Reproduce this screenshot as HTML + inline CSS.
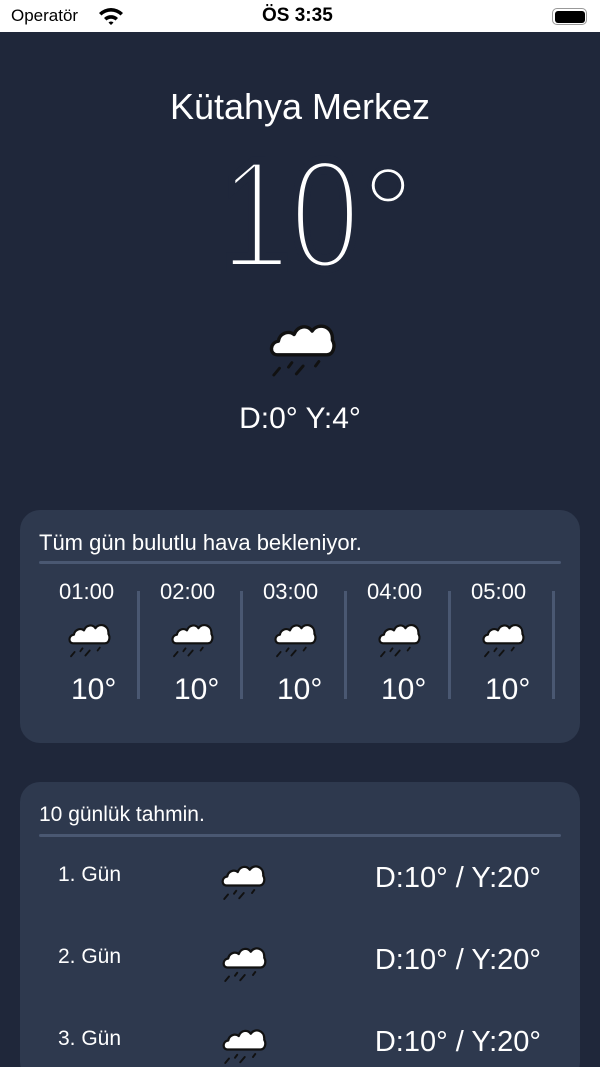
<!DOCTYPE html>
<html><head><meta charset="utf-8"><style>
*{margin:0;padding:0;box-sizing:border-box}
html,body{width:600px;height:1067px;overflow:hidden}
body{background:#1f273a;font-family:"Liberation Sans",sans-serif;color:#fff;position:relative}
.a{position:absolute;white-space:nowrap}
.sb{position:absolute;left:0;top:0;width:600px;height:32px;background:#fff;color:#000}
.card{position:absolute;left:20px;width:560px;background:#2e394e;border-radius:20px}
.ln{position:absolute;height:3px;background:#4a5872;border-radius:2px}
.sep{position:absolute;width:3px;background:#4a5872;top:591px;height:108px}
</style></head><body>
<svg width="0" height="0" style="position:absolute"><defs>
<symbol id="c" viewBox="0 0 64 64">
<path d="M10 38 C3 38 3 27 11 26 C12 19 20 16 25 20 C28 12 37 11 41 17 C46 9 60 12 59 25 C62 30 60 38 54 38 Z" fill="#fff" stroke="#111" stroke-width="3" stroke-linejoin="round"/>
<g stroke="#111" stroke-width="2.6" stroke-linecap="round"><path d="M7 56 L12 50"/><path d="M20 49 L23 45"/><path d="M27 55 L33 48"/><path d="M44 48 L47 44"/></g>
</symbol></defs></svg>
<div class="sb"><span class="a" style="left:11px;top:6px;font-size:17px">Operatör</span>
<svg class="a" style="left:98px;top:6px" width="26" height="19" viewBox="0 0 26 19"><path d="M1 7 A17 17 0 0 1 25 7 L22.5 9.5 A13.5 13.5 0 0 0 3.5 9.5Z M6 12 A10 10 0 0 1 20 12 L17.5 14.5 A6.5 6.5 0 0 0 8.5 14.5Z M10.5 16.5 L13 19 L15.5 16.5 A3.5 3.5 0 0 0 10.5 16.5Z" fill="#000"/></svg>
<span class="a" style="left:262px;top:5px;font-size:19px;font-weight:bold">ÖS 3:35</span>
<div class="a" style="left:552px;top:8px;width:35px;height:17px;border:1.5px solid #999;border-radius:5px;padding:1.5px"><div style="width:100%;height:100%;background:#000;border-radius:3px"></div></div>
</div>
<div class="a" style="left:0;width:600px;text-align:center;top:86px;font-size:36px">Kütahya Merkez</div>
<svg class="a" style="left:0;top:140px" width="600" height="140">
<text x="220" y="128" font-family="Liberation Sans" font-size="156" fill="#fff" stroke="#1f273a" stroke-width="8" textLength="140" lengthAdjust="spacingAndGlyphs">10</text>
<text x="362" y="118" font-family="Liberation Sans" font-size="130" fill="#fff" stroke="#1f273a" stroke-width="4">°</text>
</svg>
<svg class="a" style="left:266px;top:312px" width="72" height="72"><use href="#c"/></svg>
<div class="a" style="left:0;width:600px;text-align:center;top:402px;font-size:30px">D:0° Y:4°</div>
<div class="card" style="top:510px;height:233px"></div>
<div class="a" style="left:39px;top:530px;font-size:22px">Tüm gün bulutlu hava bekleniyor.</div>
<div class="ln" style="left:39px;width:522px;top:561px"></div>
<div class="sep" style="left:137px"></div><div class="sep" style="left:240px"></div><div class="sep" style="left:344px"></div><div class="sep" style="left:448px"></div><div class="sep" style="left:552px"></div>
<div class="a" style="left:59px;top:579px;font-size:22px">01:00</div>
<div class="a" style="left:160px;top:579px;font-size:22px">02:00</div>
<div class="a" style="left:263px;top:579px;font-size:22px">03:00</div>
<div class="a" style="left:367px;top:579px;font-size:22px">04:00</div>
<div class="a" style="left:471px;top:579px;font-size:22px">05:00</div>
<svg class="a" style="left:66px;top:616px" width="46" height="46"><use href="#c"/></svg>
<svg class="a" style="left:169px;top:616px" width="46" height="46"><use href="#c"/></svg>
<svg class="a" style="left:272px;top:616px" width="46" height="46"><use href="#c"/></svg>
<svg class="a" style="left:376px;top:616px" width="46" height="46"><use href="#c"/></svg>
<svg class="a" style="left:480px;top:616px" width="46" height="46"><use href="#c"/></svg>
<div class="a" style="left:71px;top:673px;font-size:30px">10°</div>
<div class="a" style="left:174px;top:673px;font-size:30px">10°</div>
<div class="a" style="left:277px;top:673px;font-size:30px">10°</div>
<div class="a" style="left:381px;top:673px;font-size:30px">10°</div>
<div class="a" style="left:485px;top:673px;font-size:30px">10°</div>
<div class="card" style="top:782px;height:300px"></div>
<div class="a" style="left:39px;top:803px;font-size:21px">10 günlük tahmin.</div>
<div class="ln" style="left:39px;width:522px;top:834px"></div>
<div class="a" style="left:58px;top:863px;font-size:21px">1. Gün</div>
<div class="a" style="left:58px;top:945px;font-size:21px">2. Gün</div>
<div class="a" style="left:58px;top:1027px;font-size:21px">3. Gün</div>
<svg class="a" style="left:219px;top:857px" width="48" height="48"><use href="#c"/></svg>
<svg class="a" style="left:220px;top:939px" width="48" height="48"><use href="#c"/></svg>
<svg class="a" style="left:220px;top:1021px" width="48" height="48"><use href="#c"/></svg>
<div class="a" style="right:59px;top:862px;font-size:29px">D:10° / Y:20°</div>
<div class="a" style="right:59px;top:944px;font-size:29px">D:10° / Y:20°</div>
<div class="a" style="right:59px;top:1026px;font-size:29px">D:10° / Y:20°</div>
</body></html>
